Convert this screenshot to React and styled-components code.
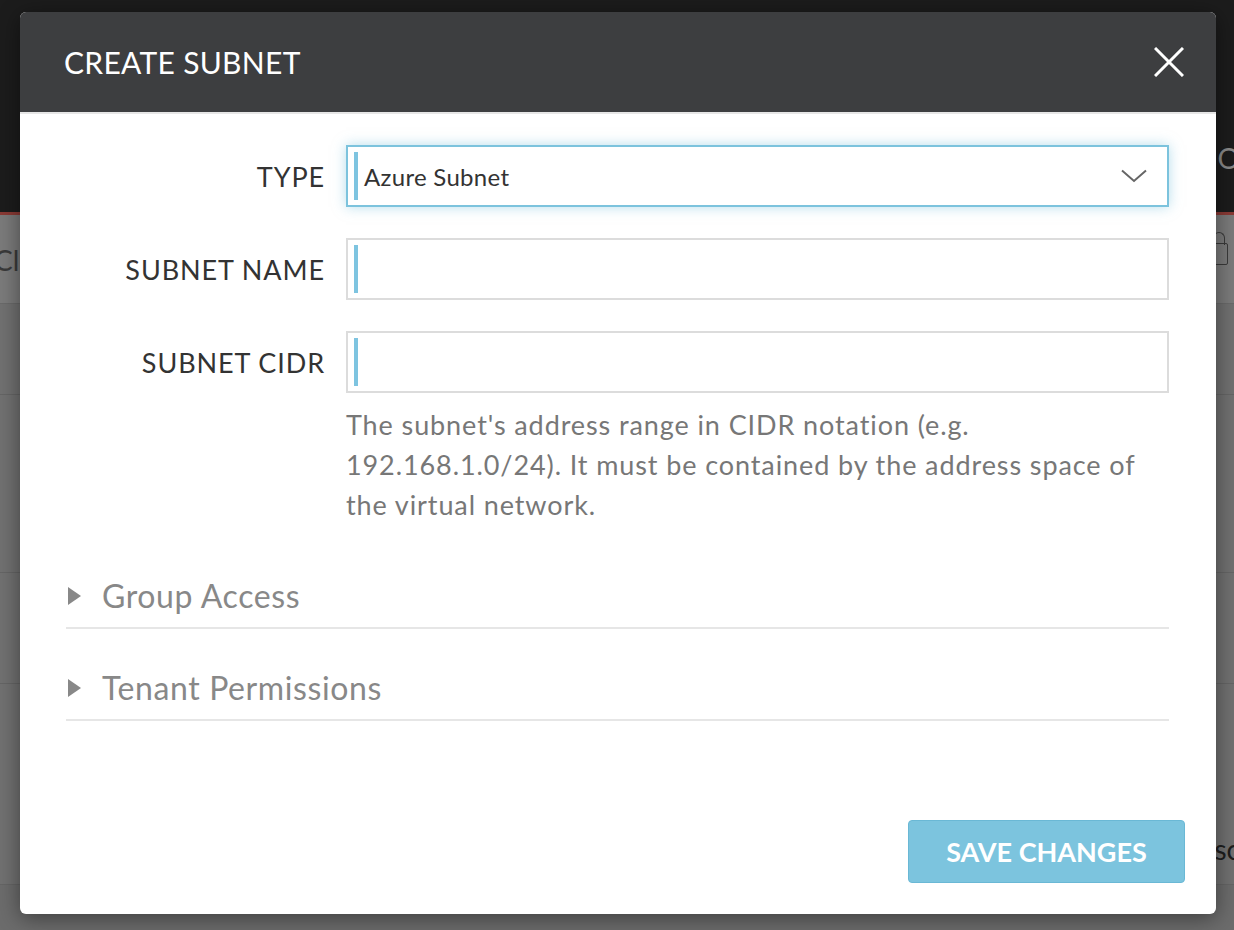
import React from 'react'
import styled, { createGlobalStyle, css } from 'styled-components'

const GlobalStyle = createGlobalStyle`
  html, body {
    margin: 0;
    padding: 0;
    background: #727272;
  }
  body {
    font-family: Lato, "Open Sans", "Liberation Sans", sans-serif;
  }
`

function CloseIcon() {
  return (
    <svg width="30" height="30" viewBox="0 0 30 30">
      <path d="M1 1 L29 29 M29 1 L1 29" stroke="#fff" strokeWidth="3" fill="none" />
    </svg>
  )
}

function Chevron() {
  return (
    <svg width="26" height="14" viewBox="0 0 26 14">
      <path d="M1 1.5 L13 12 L25 1.5" stroke="#666" strokeWidth="2" fill="none" />
    </svg>
  )
}

function App() {
  return (
    <Page>
      <GlobalStyle />
      <Backdrop>
        <BgTopBar>
          <BgEdgeText side="right">O</BgEdgeText>
        </BgTopBar>
        <BgToolbar>
          <BgEdgeText side="left">Cl</BgEdgeText>
          <BgLock />
        </BgToolbar>
        <BgRow h={90} />
        <BgRow h={177} />
        <BgRow h={110} />
        <BgRow h={200}>
          <BgEdgeText side="right" dark>sc</BgEdgeText>
        </BgRow>
      </Backdrop>

      <Overlay>
        <Modal>
          <Header>
            <Title>CREATE SUBNET</Title>
            <CloseButton aria-label="close">
              <CloseIcon />
            </CloseButton>
          </Header>

          <Body>
            <FieldRow>
              <Label>TYPE</Label>
              <InputBox focused>
                <Caret />
                <Value>Azure Subnet</Value>
                <Chevron />
              </InputBox>
            </FieldRow>

            <FieldRow>
              <Label>SUBNET NAME</Label>
              <InputBox>
                <Caret />
              </InputBox>
            </FieldRow>

            <FieldRow last>
              <Label>SUBNET CIDR</Label>
              <InputBox>
                <Caret />
              </InputBox>
              <Help>
                The subnet's address range in CIDR notation (e.g. 192.168.1.0/24). It must be
                contained by the address space of the virtual network.
              </Help>
            </FieldRow>

            <Sections>
              <Section>
                <Triangle />
                <SectionTitle>Group Access</SectionTitle>
              </Section>
              <Section>
                <Triangle />
                <SectionTitle>Tenant Permissions</SectionTitle>
              </Section>
            </Sections>
          </Body>

          <Footer>
            <SaveButton>SAVE CHANGES</SaveButton>
          </Footer>
        </Modal>
      </Overlay>
    </Page>
  )
}

export default App

const Page = styled.div`
  position: relative;
  width: 100%;
  height: 930px;
  overflow: hidden;
  background: #6c6c6c;
`

const Backdrop = styled.div`
  display: flex;
  flex-direction: column;
`

const BgTopBar = styled.div`
  position: relative;
  height: 212px;
  background: #1c1c1c;
  border-bottom: 3px solid #8a3a35;
`

const BgToolbar = styled.div`
  position: relative;
  height: 88px;
  background: #7b7b7b;
  border-bottom: 1px solid #6a6a6a;
`

const BgRow = styled.div`
  position: relative;
  height: ${p => p.h}px;
  background: #717171;
  border-bottom: 1px solid #656565;
`

const BgEdgeText = styled.span`
  position: absolute;
  ${p => p.side === 'left' ? css`left: -6px;` : css`right: -6px;`}
  top: ${p => p.side === 'left' ? '28px' : p.dark ? '148px' : '141px'};
  font-size: 28px;
  color: ${p => p.dark ? '#1e1e1e' : '#8a8a8a'};
  ${p => p.side === 'left' && css`color: #3a3a3a;`}
`

const BgLock = styled.span`
  position: absolute;
  right: 6px;
  top: 28px;
  width: 16px;
  height: 20px;
  border: 1px solid #3a3a3a;
  border-radius: 2px;
  &::before {
    content: '';
    position: absolute;
    left: 2px;
    top: -12px;
    width: 10px;
    height: 12px;
    border: 1px solid #3a3a3a;
    border-bottom: none;
    border-radius: 6px 6px 0 0;
  }
`

const Overlay = styled.div`
  position: absolute;
  inset: 0;
  padding: 12px 18px 16px 20px;
  display: flex;
`

const Modal = styled.div`
  flex: 1;
  display: flex;
  flex-direction: column;
  background: #fff;
  border-radius: 6px;
  overflow: hidden;
  box-shadow: 0 4px 22px rgba(0, 0, 0, 0.45);
`

const Header = styled.div`
  height: 100px;
  flex: none;
  display: flex;
  align-items: center;
  justify-content: space-between;
  padding: 0 32px 0 44px;
  background: #3d3e40;
  border-bottom: 2px solid #e6e6e6;
`

const Title = styled.h1`
  margin: 0;
  font-size: 30px;
  font-weight: 400;
  letter-spacing: 0.3px;
  color: #fff;
`

const CloseButton = styled.button`
  display: flex;
  padding: 0;
  border: none;
  background: none;
  cursor: pointer;
`

const Body = styled.div`
  padding: 31px 47px 0 46px;
`

const FieldRow = styled.div`
  display: grid;
  grid-template-columns: 259px 1fr;
  column-gap: 21px;
  margin-bottom: ${p => (p.last ? 0 : 31)}px;
`

const Label = styled.label`
  align-self: center;
  text-align: right;
  font-size: 27px;
  letter-spacing: 0.9px;
  color: #333;
`

const InputBox = styled.div`
  box-sizing: border-box;
  height: 62px;
  display: flex;
  align-items: center;
  padding: 0 20px 0 6px;
  border: 2px solid #dcdcdc;
  background: #fff;
  ${p => p.focused && css`
    border-color: #7cc3dd;
    box-shadow: 0 0 12px rgba(124, 195, 221, 0.55);
  `}
`

const Caret = styled.span`
  width: 4px;
  height: 48px;
  background: #7ec4e0;
  flex: none;
`

const Value = styled.span`
  flex: 1;
  margin-left: 6px;
  font-size: 24px;
  letter-spacing: 0.3px;
  color: #333;
`

const Help = styled.p`
  grid-column: 2;
  margin: 12px 0 0;
  font-size: 27px;
  letter-spacing: 0.9px;
  line-height: 40px;
  color: #777;
`

const Sections = styled.div`
  margin-top: 12px;
`

const Section = styled.div`
  display: flex;
  align-items: center;
  padding: 39px 0 11px 2px;
  border-bottom: 2px solid #e6e6e6;
`

const Triangle = styled.span`
  width: 0;
  height: 0;
  border-top: 9px solid transparent;
  border-bottom: 9px solid transparent;
  border-left: 13px solid #888;
  margin-right: 21px;
`

const SectionTitle = styled.span`
  font-size: 32px;
  letter-spacing: 0.6px;
  line-height: 40px;
  color: #888;
`

const Footer = styled.div`
  margin-top: auto;
  display: flex;
  justify-content: flex-end;
  padding: 0 31px 31px 0;
`

const SaveButton = styled.button`
  width: 277px;
  height: 63px;
  border: 1px solid #6ab8d5;
  border-radius: 4px;
  background: #7cc4de;
  color: #fff;
  font-family: inherit;
  font-size: 27px;
  font-weight: 700;
  cursor: pointer;
`
